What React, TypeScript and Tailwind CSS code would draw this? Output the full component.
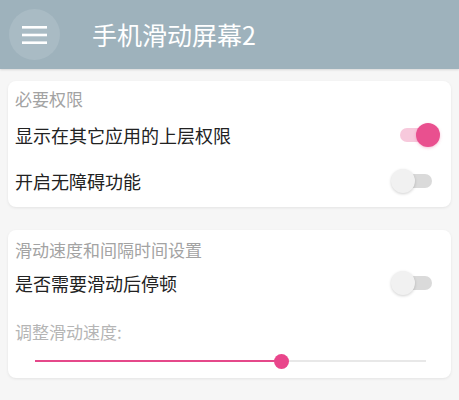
import React from 'react';

const font = { fontFamily: '"Noto Sans CJK SC", "Noto Sans", sans-serif' };

function Toggle({ on }: { on: boolean }) {
    if (on) {
        return (
            <div className="relative h-[26px] w-[40px]">
                <div className="absolute left-0 top-[6px] h-[14px] w-[36px] rounded-full bg-[#f7c9dc]" />
                <div className="absolute right-0 top-[1px] h-[24px] w-[24px] rounded-full bg-[#e9508f] shadow-[0_1px_3px_rgba(233,80,143,0.35)]" />
            </div>
        );
    }
    return (
        <div className="relative h-[26px] w-[41px]">
            <div className="absolute right-0 top-[6px] h-[14px] w-[36px] rounded-full bg-[#dadada]" />
            <div className="absolute left-0 top-[1px] h-[24px] w-[24px] rounded-full bg-[#f1f1f1] shadow-[0_1px_3px_rgba(0,0,0,0.18)]" />
        </div>
    );
}

export default function App() {
    return (
        <div className="h-[400px] w-[459px] overflow-hidden bg-[#f6f6f6]" style={font}>
            <header className="flex h-[69px] items-center bg-[#9eb2bc] shadow-[0_1px_2px_rgba(0,0,0,0.12)]">
                <div className="ml-[9px] flex h-[51px] w-[51px] items-center justify-center rounded-full bg-[#a9bbc4]">
                    <svg width="25" height="20" viewBox="0 0 25 20">
                        <rect x="0" y="1" width="25" height="2.6" fill="#fff" />
                        <rect x="0" y="8.7" width="25" height="2.6" fill="#fff" />
                        <rect x="0" y="16.4" width="25" height="2.6" fill="#fff" />
                    </svg>
                </div>
                <h1 className="ml-[32px] text-[25px] leading-none text-white">手机滑动屏幕2</h1>
            </header>

            <div className="px-[8px] pt-[12px]">
                <section className="rounded-[8px] bg-white pb-[3px] pl-[7px] pr-[11px] pt-[7px] shadow-[0_1px_3px_rgba(0,0,0,0.08)]">
                    <div className="flex h-[22px] items-center text-[17px] text-[#a3a3a3]">必要权限</div>
                    <div className="mt-[2px] flex h-[46px] items-center justify-between">
                        <span className="text-[18px] text-[#222]">显示在其它应用的上层权限</span>
                        <Toggle on />
                    </div>
                    <div className="flex h-[46px] items-center justify-between">
                        <span className="text-[18px] text-[#222]">开启无障碍功能</span>
                        <div className="mr-[8px]"><Toggle on={false} /></div>
                    </div>
                </section>

                <section className="mt-[23px] rounded-[8px] bg-white pb-[6px] pl-[7px] pr-[11px] pt-[9px] shadow-[0_1px_3px_rgba(0,0,0,0.08)]">
                    <div className="flex h-[22px] items-center text-[17px] text-[#a3a3a3]">滑动速度和间隔时间设置</div>
                    <div className="flex h-[44px] items-center justify-between">
                        <span className="text-[18px] text-[#222]">是否需要滑动后停顿</span>
                        <div className="mr-[8px]"><Toggle on={false} /></div>
                    </div>
                    <div className="mt-[16px] flex h-[22px] items-center text-[17px] text-[#b5b5b5]">调整滑动速度:</div>
                    <div className="relative ml-[20px] mr-[14px] mt-[7px] h-[22px]">
                        <div className="absolute left-0 right-0 top-[10px] h-[2px] bg-[#e8e8e8]" />
                        <div className="absolute left-0 top-[10px] h-[2px] w-[63%] bg-[#e5488a]" />
                        <div className="absolute left-[63%] top-[4px] -ml-[7px] h-[15px] w-[15px] rounded-full bg-[#e9468b]" />
                    </div>
                </section>
            </div>
        </div>
    );
}
